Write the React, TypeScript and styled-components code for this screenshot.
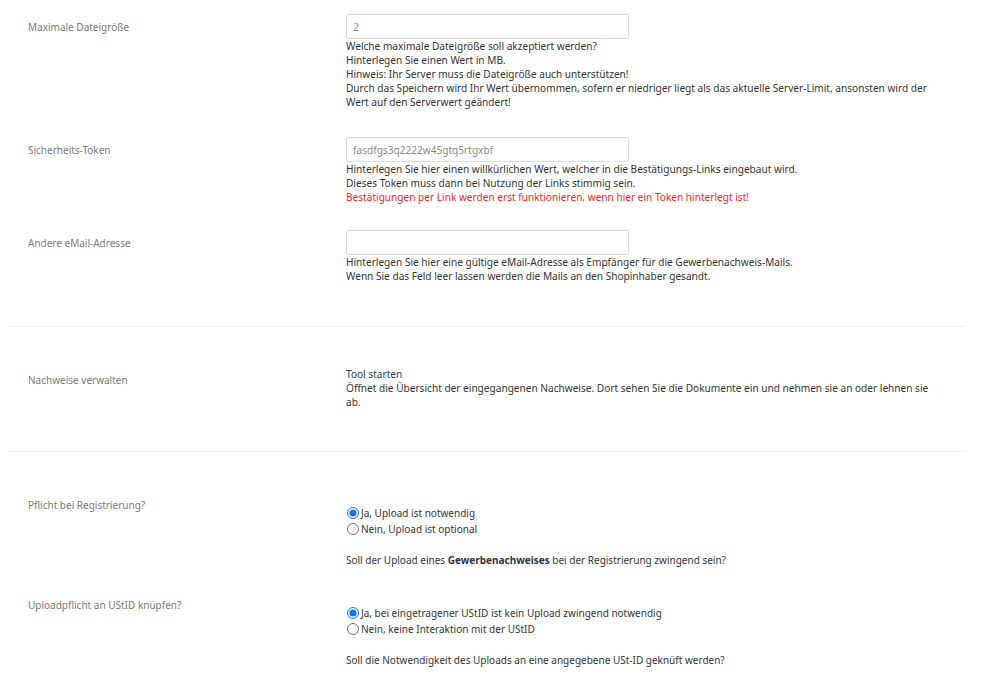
import * as React from 'react'
import styled, { createGlobalStyle } from 'styled-components'

const GlobalStyle = createGlobalStyle`
  html, body {
    margin: 0;
    padding: 0;
    background: #fff;
  }
  body {
    font-family: "Noto Sans", "Open Sans", sans-serif;
    font-size: 10.1px;
    color: #333;
  }
`

const Page = styled.div`
  width: 958px;
  padding-left: 8px;
`

const Section = styled.section<{ pad?: string }>`
  padding: ${ ({ pad }) => pad || '0' };
  border-bottom: 1px solid #f1f1f1;

  &:last-child {
    border-bottom: none;
  }
`

const Row = styled.div<{ top?: number; bottom?: number }>`
  display: grid;
  grid-template-columns: 338px 590px;
  padding-top: ${ ({ top }) => top ?? 14 }px;
  padding-bottom: ${ ({ bottom }) => bottom ?? 14 }px;
`

const Label = styled.div<{ offset?: number }>`
  padding-left: 20px;
  padding-top: ${ ({ offset }) => offset ?? 6 }px;
  color: #7a7a7a;
  font-size: 10px;
  line-height: 14px;
`

const Field = styled.div``

const Input = styled.input`
  display: block;
  box-sizing: border-box;
  width: 283px;
  height: 25px;
  margin: 0;
  padding: 0 6px;
  border: 1px solid #dcdcdc;
  border-radius: 2px;
  font-family: "Noto Sans", "Open Sans", sans-serif;
  font-size: 10.1px;
  color: #888;
  outline: none;
`

const Help = styled.div<{ warn?: boolean }>`
  font-size: 10.1px;
  line-height: 14px;
  color: ${ ({ warn }) => warn ? '#ff1a1a' : '#333' };
`

const ToolLink = styled.a`
  display: block;
  color: #1d3b5a;
  font-size: 10.1px;
  line-height: 14px;
  text-decoration: none;
`

const RadioGroup = styled.div`
  display: flex;
  flex-direction: column;
  margin-top: 7px;
`

const RadioLabel = styled.label`
  display: flex;
  align-items: center;
  height: 16px;
  font-size: 10px;
  color: #333;
`

const Radio = styled.input`
  width: 12px;
  height: 12px;
  margin: 0 2px 0 1px;
  accent-color: #1a73e8;
`

const Question = styled.p`
  margin: 16px 0 0;
  font-size: 10px;
  line-height: 14px;

  b {
    font-weight: 700;
  }
`

interface Choice {
  label: string
  value: string
}

const RadioSet = ({ name, choices, value }: { name: string; choices: Choice[]; value: string }) => (
  <RadioGroup>
    { choices.map(choice => (
      <RadioLabel key={ choice.value }>
        <Radio type='radio' name={ name } value={ choice.value } defaultChecked={ choice.value === value } />
        { choice.label }
      </RadioLabel>
    )) }
  </RadioGroup>
)

export default function App() {
  return (
    <Page>
      <GlobalStyle />
      <Section pad='0 0 29px'>
        <Row>
          <Label>Maximale Dateigröße</Label>
          <Field>
            <Input defaultValue='2' />
            <Help>Welche maximale Dateigröße soll akzeptiert werden?</Help>
            <Help>Hinterlegen Sie einen Wert in MB.</Help>
            <Help>Hinweis: Ihr Server muss die Dateigröße auch unterstützen!</Help>
            <Help>Durch das Speichern wird Ihr Wert übernommen, sofern er niedriger liegt als das aktuelle Server-Limit, ansonsten wird der Wert auf den Serverwert geändert!</Help>
          </Field>
        </Row>
        <Row bottom={ 12 }>
          <Label>Sicherheits-Token</Label>
          <Field>
            <Input defaultValue='fasdfgs3q2222w45gtq5rtgxbf' />
            <Help>Hinterlegen Sie hier einen willkürlichen Wert, welcher in die Bestätigungs-Links eingebaut wird.</Help>
            <Help>Dieses Token muss dann bei Nutzung der Links stimmig sein.</Help>
            <Help warn>Bestätigungen per Link werden erst funktionieren, wenn hier ein Token hinterlegt ist!</Help>
          </Field>
        </Row>
        <Row>
          <Label>Andere eMail-Adresse</Label>
          <Field>
            <Input defaultValue='' />
            <Help>Hinterlegen Sie hier eine gültige eMail-Adresse als Empfänger für die Gewerbenachweis-Mails.</Help>
            <Help>Wenn Sie das Feld leer lassen werden die Mails an den Shopinhaber gesandt.</Help>
          </Field>
        </Row>
      </Section>
      <Section pad='40px 0 42px'>
        <Row top={ 0 } bottom={ 0 }>
          <Label>Nachweise verwalten</Label>
          <Field>
            <ToolLink href='#'>Tool starten</ToolLink>
            <Help>Öffnet die Übersicht der eingegangenen Nachweise. Dort sehen Sie die Dokumente ein und nehmen sie an oder lehnen sie ab.</Help>
          </Field>
        </Row>
      </Section>
      <Section pad='46px 0 0'>
        <Row top={ 0 } bottom={ 31 }>
          <Label offset={ 0 }>Pflicht bei Registrierung?</Label>
          <Field>
            <RadioSet
              name='pflicht'
              value='ja'
              choices={ [
                { label: 'Ja, Upload ist notwendig', value: 'ja' },
                { label: 'Nein, Upload ist optional', value: 'nein' },
              ] }
            />
            <Question>Soll der Upload eines <b>Gewerbenachweises</b> bei der Registrierung zwingend sein?</Question>
          </Field>
        </Row>
        <Row top={ 0 } bottom={ 20 }>
          <Label offset={ 0 }>Uploadpflicht an UStID knüpfen?</Label>
          <Field>
            <RadioSet
              name='ustid'
              value='ja'
              choices={ [
                { label: 'Ja, bei eingetragener UStID ist kein Upload zwingend notwendig', value: 'ja' },
                { label: 'Nein, keine Interaktion mit der UStID', value: 'nein' },
              ] }
            />
            <Question>Soll die Notwendigkeit des Uploads an eine angegebene USt-ID geknüft werden?</Question>
          </Field>
        </Row>
      </Section>
    </Page>
  )
}
